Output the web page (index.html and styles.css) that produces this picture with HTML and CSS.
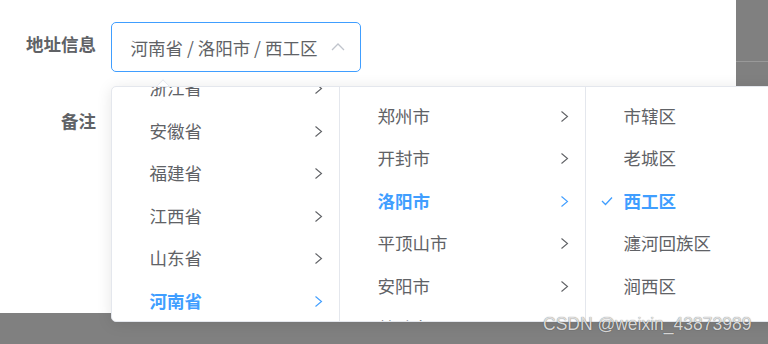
FILE: index.html
```html
<!DOCTYPE html>
<html>
<head>
  <title>地址信息</title>
  <meta charset="UTF-8">
  <link rel="stylesheet" href="styles.css">
</head>
<body>
  <div class="page">
    <div class="dialog">
      <div class="form-item">
        <label class="form-label">地址信息</label>
        <div class="cascader is-focus">
          <span class="cascader-value">河南省 / 洛阳市 / 西工区</span>
          <svg class="cascader-arrow" width="14" height="8" viewBox="0 0 14 8"><polyline points="1,7 7,1 13,7" /></svg>
        </div>
      </div>
      <div class="form-item form-item-remark">
        <label class="form-label">备注</label>
      </div>
    </div>
    <div class="page-side">
      <div class="side-bar"></div>
    </div>
  </div>

  <!-- cascader popper -->
  <div class="cascader-dropdown">
    <div class="popper-arrow"></div>
    <div class="cascader-panel">
      <div class="cascader-menu menu-province">
        <ul class="menu-list scrolled">
          <li class="node">浙江省<svg class="node-arrow" width="9" height="13" viewBox="0 0 9 13"><polyline points="1.5,1.5 7.5,6.5 1.5,11.5" /></svg></li>
          <li class="node">安徽省<svg class="node-arrow" width="9" height="13" viewBox="0 0 9 13"><polyline points="1.5,1.5 7.5,6.5 1.5,11.5" /></svg></li>
          <li class="node">福建省<svg class="node-arrow" width="9" height="13" viewBox="0 0 9 13"><polyline points="1.5,1.5 7.5,6.5 1.5,11.5" /></svg></li>
          <li class="node">江西省<svg class="node-arrow" width="9" height="13" viewBox="0 0 9 13"><polyline points="1.5,1.5 7.5,6.5 1.5,11.5" /></svg></li>
          <li class="node">山东省<svg class="node-arrow" width="9" height="13" viewBox="0 0 9 13"><polyline points="1.5,1.5 7.5,6.5 1.5,11.5" /></svg></li>
          <li class="node in-active-path">河南省<svg class="node-arrow" width="9" height="13" viewBox="0 0 9 13"><polyline points="1.5,1.5 7.5,6.5 1.5,11.5" /></svg></li>
        </ul>
      </div>
      <div class="cascader-menu menu-city">
        <ul class="menu-list">
          <li class="node">郑州市<svg class="node-arrow" width="9" height="13" viewBox="0 0 9 13"><polyline points="1.5,1.5 7.5,6.5 1.5,11.5" /></svg></li>
          <li class="node">开封市<svg class="node-arrow" width="9" height="13" viewBox="0 0 9 13"><polyline points="1.5,1.5 7.5,6.5 1.5,11.5" /></svg></li>
          <li class="node in-active-path">洛阳市<svg class="node-arrow" width="9" height="13" viewBox="0 0 9 13"><polyline points="1.5,1.5 7.5,6.5 1.5,11.5" /></svg></li>
          <li class="node">平顶山市<svg class="node-arrow" width="9" height="13" viewBox="0 0 9 13"><polyline points="1.5,1.5 7.5,6.5 1.5,11.5" /></svg></li>
          <li class="node">安阳市<svg class="node-arrow" width="9" height="13" viewBox="0 0 9 13"><polyline points="1.5,1.5 7.5,6.5 1.5,11.5" /></svg></li>
          <li class="node">鹤壁市<svg class="node-arrow" width="9" height="13" viewBox="0 0 9 13"><polyline points="1.5,1.5 7.5,6.5 1.5,11.5" /></svg></li>
        </ul>
      </div>
      <div class="cascader-menu menu-district">
        <ul class="menu-list">
          <li class="node">市辖区</li>
          <li class="node">老城区</li>
          <li class="node is-active"><svg class="node-check" width="12" height="10" viewBox="0 0 12 10"><polyline points="1,5 4.5,8.5 11,1.5" /></svg>西工区</li>
          <li class="node">瀍河回族区</li>
          <li class="node">涧西区</li>
        </ul>
      </div>
    </div>
  </div>

  <div class="watermark">CSDN @weixin_43873989</div>
</body>
</html>
```

FILE: styles.css
```css
body {
  margin: 0;
  width: 768px;
  height: 344px;
  overflow: hidden;
  position: relative;
  background-color: #808080;
  font-family: "Noto Sans CJK SC", "Liberation Sans", sans-serif;
  color: #606266;
}
.page {
  display: flex;
}
.dialog {
  width: 736px;
  height: 313px;
  background-color: #fff;
  padding-top: 22px;
  box-sizing: border-box;
}
.page-side {
  flex: 1;
}
.side-bar {
  height: 62px;
  border-bottom: 1px solid #999;
  box-sizing: border-box;
}
.form-item {
  display: flex;
  align-items: flex-start;
}
.form-item-remark {
  margin-top: 27px;
}
.form-label {
  width: 111px;
  padding-right: 15px;
  box-sizing: border-box;
  text-align: right;
  font-size: 17.5px;
  font-weight: bold;
  line-height: 44px;
  color: #606266;
}
.cascader {
  width: 250px;
  height: 50px;
  box-sizing: border-box;
  border: 1px solid #dcdfe6;
  border-radius: 5px;
  display: flex;
  align-items: center;
  padding: 0 15px 0 18.5px;
}
.cascader.is-focus {
  border-color: #409eff;
}
.cascader-value {
  font-size: 17.5px;
  color: #606266;
  white-space: pre;
}
.cascader-arrow {
  margin-left: auto;
  fill: none;
  stroke: #c0c4cc;
  stroke-width: 1.3;
}
.cascader-dropdown {
  position: absolute;
  left: 111px;
  top: 86px;
  width: 680px;
  height: 236px;
  background-color: #fff;
  border: 1px solid #e4e7ed;
  border-radius: 5px;
  box-sizing: border-box;
  box-shadow: 0 2px 15px rgba(0, 0, 0, 0.1);
}
.popper-arrow {
  position: absolute;
  left: 46px;
  top: -6px;
  width: 10px;
  height: 10px;
  box-sizing: border-box;
  background-color: #fff;
  border-top: 1px solid #e4e7ed;
  border-left: 1px solid #e4e7ed;
  transform: rotate(45deg);
  clip-path: polygon(0 0, 100% 0, 0 100%);
  z-index: 2;
}
.cascader-panel {
  display: flex;
  height: 100%;
  overflow: hidden;
  border-radius: 5px;
}
.cascader-menu {
  height: 100%;
  overflow: hidden;
  border-right: 1px solid #e4e7ed;
  box-sizing: border-box;
}
.menu-province {
  width: 228px;
}
.menu-city {
  width: 246px;
}
.menu-district {
  flex: 1;
  border-right: none;
}
.menu-list {
  list-style: none;
  margin: 0;
  padding: 7.5px 0;
}
.menu-list.scrolled {
  margin-top: -20px;
  padding-top: 0;
}
.node {
  position: relative;
  height: 42.5px;
  line-height: 42.5px;
  padding: 0 37.5px;
  font-size: 17.5px;
  color: #606266;
  white-space: nowrap;
}
.node-arrow {
  position: absolute;
  right: 16.5px;
  top: 15px;
  fill: none;
  stroke: #606266;
  stroke-width: 1.1;
}
.node-check {
  position: absolute;
  left: 15px;
  top: 16px;
  fill: none;
  stroke: #409eff;
  stroke-width: 1.3;
}
.node.in-active-path,
.node.is-active {
  color: #409eff;
  font-weight: bold;
}
.node.in-active-path .node-arrow {
  stroke: #409eff;
}
.watermark {
  position: absolute;
  left: 543px;
  top: 313px;
  font-family: "Liberation Sans", Arial, sans-serif;
  font-size: 17.5px;
  line-height: 22px;
  color: rgba(235, 235, 235, 0.9);
  text-shadow: 0 0 1px rgba(0, 0, 0, 0.6);
  z-index: 3;
}
```
